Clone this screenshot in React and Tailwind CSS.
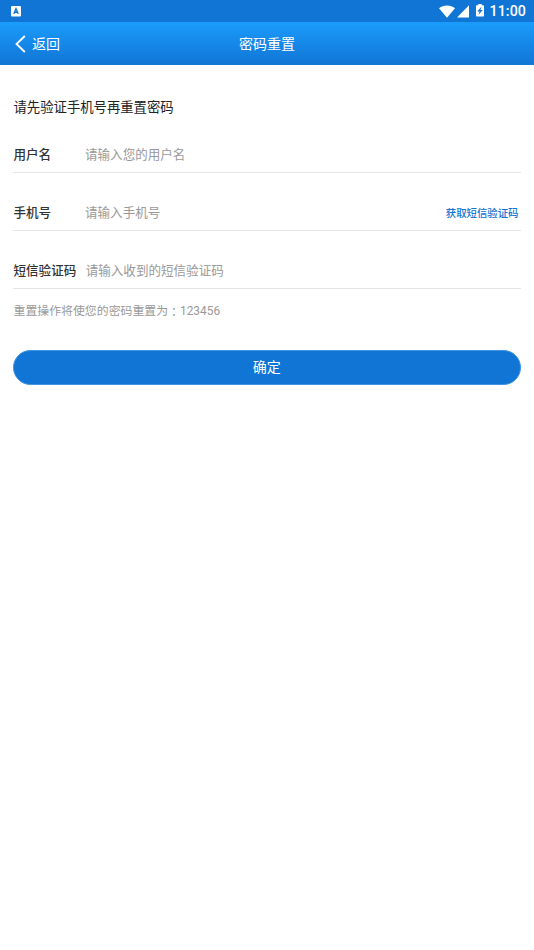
import React from 'react'

const fields = [
  { label: '用户名', placeholder: '请输入您的用户名' },
  { label: '手机号', placeholder: '请输入手机号', action: '获取短信验证码' },
  { label: '短信验证码', placeholder: '请输入收到的短信验证码' },
]

function StatusBar() {
  return (
    <div className="h-[22px] bg-[#1175d5] flex items-center justify-between pl-[11px] pr-[8px] text-white">
      <svg width="10" height="11" viewBox="0 0 10 11" className="mt-px">
        <rect width="10" height="10.4" rx="1" fill="#fff" />
        <path d="M2.8 7.8 5 2.8l2.2 5M3.5 6.3h3" fill="none" stroke="#1175d5" strokeWidth="1.4" />
      </svg>
      <div className="flex items-center">
        <svg width="16" height="13" viewBox="0 0 16 13" fill="#fff">
          <path d="M0 3.2C4.6-.3 11.4-.3 16 3.2L8 12.8z" />
        </svg>
        <svg width="12" height="13" viewBox="0 0 12 13" className="ml-[2px]" fill="#fff">
          <path d="M12 .2v12.4H0z" />
        </svg>
        <svg width="8" height="13" viewBox="0 0 8 13" className="ml-[7px] -mt-[2px]">
          <path d="M2.3 0h3.4v1.2H7.2q.8 0 .8.8v9.8q0 .8-.8.8H.8q-.8 0-.8-.8V2q0-.8.8-.8h1.5z" fill="#fff" />
          <path d="M5.6 2.6 1.2 7.5h2.3l-1.1 3.6 4.4-5.2H4.4z" fill="#1175d5" />
        </svg>
        <span className="ml-[6px] font-['Roboto'] font-medium text-[14.2px] leading-[22px] tracking-[0.1px]">11:00</span>
      </div>
    </div>
  )
}

function Field({ label, placeholder, action }) {
  return (
    <div className="h-[58px] flex items-end">
      <div className="flex-1 h-[36px] pt-[2px] border-b border-[#e5e5e5] flex items-center text-[12.55px]">
        <span className="min-w-[72px] pl-[0.5px] pr-[9.5px] text-[#333] font-medium">{label}</span>
        <span className="text-[#999] flex-1">{placeholder}</span>
        {action && <button className="text-[#1175d5] text-[10.4px] font-medium pt-px pr-[2px]">{action}</button>}
      </div>
    </div>
  )
}

export default function App() {
  return (
    <div className="h-[950px] bg-white overflow-hidden font-['Roboto','Noto_Sans_CJK_SC',sans-serif]">
      <StatusBar />
      <header className="h-[43px] bg-linear-to-b from-[#1b9cfc] to-[#1175d5] text-white text-[14px] grid grid-cols-3 items-center">
        <button className="flex items-center pl-[15px]">
          <svg width="11" height="18" viewBox="0 0 11 18" fill="none" stroke="#fff" strokeWidth="1.8">
            <path d="M9.8 1 1.5 9l8.3 8" />
          </svg>
          <span className="ml-[6px] pt-[2px]">返回</span>
        </button>
        <h1 className="text-center pt-[2px]">密码重置</h1>
      </header>

      <main className="pl-[13px] pr-[13.5px]">
        <h2 className="mt-[33px] h-[20px] leading-[20px] pl-[0.5px] text-[13.35px] text-[#222]">请先验证手机号再重置密码</h2>
        <div className="-mt-[3px]">
          {fields.map(f => <Field key={f.label} {...f} />)}
        </div>
        <p className="mt-[11px] h-[20px] leading-[20px] pl-[0.5px] text-[11.9px] text-[#999]">
          重置操作将使您的密码重置为<span className="relative top-px font-['Noto_Sans_CJK_TC']">：</span>123456
        </p>
        <button className="block w-full mt-[30px] h-[35px] rounded-full bg-[#1175d5] border border-[#3f93e2] text-white text-[14px]">
          确定
        </button>
      </main>
    </div>
  )
}
